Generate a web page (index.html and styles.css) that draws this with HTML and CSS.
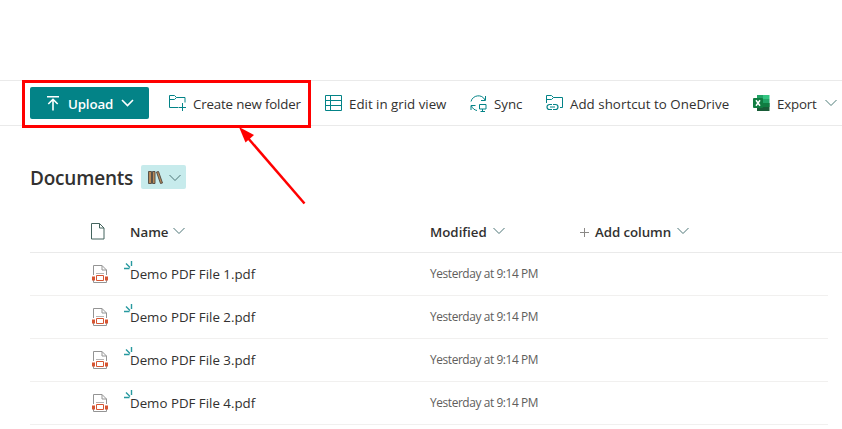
FILE: index.html
```html
<!DOCTYPE html>
<html lang="en">
<head>
<meta charset="utf-8">
<title>Documents</title>
<link rel="stylesheet" href="styles.css">
</head>
<body>
<svg class="defs" width="0" height="0" aria-hidden="true">
  <symbol id="chev" viewBox="0 0 12 8"><path d="M.5 1 6 6.500 11.500 1" fill="none" stroke="currentColor"/></symbol>
  <symbol id="pdf" viewBox="0 0 16 18">
    <path d="M1.500 10V.500h8.500l4.500 4.500v5M1.500 15v2.500h13V15M10 .500V5h4.500" fill="#fff" stroke="#949494"/>
    <path d="M4 8.500h8" stroke="#b5b5b5"/>
    <path d="M0 11.500h3v4H0zM13 11.500h3v4h-3z" fill="#d65532"/>
    <path d="M4.500 10.500h7v5h-7z" fill="#fff" stroke="#d65532"/>
  </symbol>
  <symbol id="spark" viewBox="0 0 9 9"><path d="M0 7.500h5.500M2 2.500l4 4M7.500 0v5" fill="none" stroke="#27999f" stroke-width="1.400"/></symbol>
</svg>
<header class="toolbar">
  <button class="upload">
    <svg class="i-up" viewBox="0 0 12 15"><path d="M0 .800h12M6 14.500V3.500M1.300 8 6 3.300 10.700 8" fill="none" stroke="#fff" stroke-width="1.600"/></svg>
    <span class="t-upload">Upload</span>
    <svg class="chev bold"><use href="#chev"/></svg>
  </button>
  <div class="cmd create">
    <svg width="18" height="16" viewBox="0 0 18 16" fill="none" stroke="#038387"><path d="M9.500 12.500H.500V.500h5l2 2h8.500v5M.500 4.500h5l2-2M13.500 8v8M10 12.500h7"/></svg>
    <span class="t-create">Create new folder</span>
  </div>
  <div class="cmd grid">
    <svg width="17" height="17" viewBox="0 0 17 17" fill="none" stroke="#038387"><path d="M.500.500h16v15H.500zM5.500.500v15M.500 5.500h16M.500 10.500h16"/></svg>
    <span class="t-grid">Edit in grid view</span>
  </div>
  <div class="cmd sync">
    <svg width="17" height="17" viewBox="0 0 17 17" fill="none" stroke="#038387"><path d="M1 6.500C2.500 0 12-1.500 15 5M15.500 1v4.500H11M1 15v-4.500h4.500M1.500 11c1 2.500 3 4 5.500 4.500M9.500 9.500h6.500V14H9.500zM12.500 14v2.500M10.500 16.500h4.500"/></svg>
    <span class="t-sync">Sync</span>
  </div>
  <div class="cmd short">
    <svg width="18" height="16" viewBox="0 0 18 16" fill="none" stroke="#038387"><path d="M.500 8V.500h5l2 2h9v10H14M.500 4.500h5l2-2"/><path d="M6 9.500H3.500a2.500 2.500 0 0 0 0 5H6M7 9.500h2.500a2.500 2.500 0 0 1 0 5H7M4 12h5" stroke-width="1.200"/></svg>
    <span class="t-short">Add shortcut to OneDrive</span>
  </div>
  <div class="cmd export">
    <svg width="17" height="16" viewBox="0 0 17 16"><path d="M4 0h6v4H4z" fill="#21a366"/><path d="M10 0h6.500v4H10z" fill="#33c481"/><path d="M4 4h6v4H4z" fill="#107c41"/><path d="M10 4h6.500v4H10z" fill="#21a366"/><path d="M4 8h12.500v8H4z" fill="#185c37"/><path d="M10 8h6.500v4H10z" fill="#107c41"/><rect y="3" width="10" height="10" rx="1" fill="#107c41"/><path d="m3 5.300 4 5.400M7 5.300l-4 5.400" stroke="#fff" stroke-width="1.500"/></svg>
    <span class="t-export">Export</span>
    <svg class="chev teal"><use href="#chev"/></svg>
  </div>
</header>
<main>
  <div class="title">
    <h1>Documents</h1>
    <div class="view">
      <svg width="15" height="13" viewBox="0 0 15 13" fill="#b98a58" stroke="#4c4640" stroke-width=".9"><path d="M.500.500H3.500v12H.500zM4.500 .500h2.500v12H4.500zM8.500 1l2-.500 4 11.500-2 .500z"/></svg>
      <svg class="chev"><use href="#chev"/></svg>
    </div>
  </div>
  <div class="row head">
    <svg class="doc" viewBox="0 0 14 17" fill="none" stroke="#44645e"><path d="M.500.500h8l4.500 4.500v11H.500zM8.500.500V5H13"/></svg>
    <div class="name"><span class="t-name">Name</span><svg class="chev"><use href="#chev"/></svg></div>
    <div class="mod"><span class="t-mod">Modified</span><svg class="chev"><use href="#chev"/></svg></div>
    <div class="add"><svg width="9" height="9" viewBox="0 0 9 9"><path d="M4.500 0v9M0 4.500h9" stroke="#8a8886"/></svg><span class="t-add">Add column</span><svg class="chev"><use href="#chev"/></svg></div>
  </div>
  <div class="row"><svg class="pdf"><use href="#pdf"/></svg><div class="name file"><svg class="spark"><use href="#spark"/></svg>Demo PDF File 1.pdf</div><div class="date">Yesterday at 9:14 PM</div></div>
  <div class="row"><svg class="pdf"><use href="#pdf"/></svg><div class="name file"><svg class="spark"><use href="#spark"/></svg>Demo PDF File 2.pdf</div><div class="date">Yesterday at 9:14 PM</div></div>
  <div class="row"><svg class="pdf"><use href="#pdf"/></svg><div class="name file"><svg class="spark"><use href="#spark"/></svg>Demo PDF File 3.pdf</div><div class="date">Yesterday at 9:14 PM</div></div>
  <div class="row"><svg class="pdf"><use href="#pdf"/></svg><div class="name file"><svg class="spark"><use href="#spark"/></svg>Demo PDF File 4.pdf</div><div class="date">Yesterday at 9:14 PM</div></div>
</main>
<svg class="callout" width="842" height="429" viewBox="0 0 842 429">
  <rect x="23.500" y="81.500" width="286" height="45" fill="none" stroke="#f00" stroke-width="3"/>
  <path d="m304.500 203.500-57-66" stroke="#f00" stroke-width="2.500"/>
  <path d="m239 127 15 8-8.500 7.500z" fill="#f00"/>
</svg>
</body>
</html>
```

FILE: styles.css
```css
* { box-sizing: border-box; }
body {
  margin: 0;
  padding-top: 80px;
  height: 429px;
  overflow: hidden;
  position: relative;
  background: #fff;
  color: #323130;
  font: 13.3px/20px "Open Sans", "Noto Sans", sans-serif;
  white-space: nowrap;
}
svg { flex: none; display: block; }
.defs { position: absolute; }
span { flex: none; }
.toolbar {
  height: 46px;
  border-top: 1px solid #eaeaea;
  border-bottom: 1px solid #eaeaea;
  padding-left: 30px;
  display: flex;
  align-items: center;
}
.toolbar span { padding-top: 2px; }
.upload {
  width: 119px;
  height: 32px;
  flex: none;
  margin: 0 20px 0 0;
  padding: 0 0 0 17px;
  border: 0;
  border-radius: 2px;
  background: #038387;
  color: #fff;
  font: 600 13.3px/20px "Open Sans", sans-serif;
  letter-spacing: -.15px;
  display: flex;
  align-items: center;
}
.i-up { width: 12px; height: 15px; margin-right: 9px; }
.t-upload { width: 53px; text-align: left; }
.chev { width: 12px; height: 8px; color: #4c7476; }
.chev.bold { width: 13px; color: #fff; stroke-width: 1.6; }
.chev.teal { color: #4e7d78; }
.cmd { display: flex; align-items: center; flex: none; }
.create { width: 156px; gap: 6px; }
.t-create { letter-spacing: -.16px; }
.grid { width: 145px; gap: 7px; }
.sync { width: 76px; gap: 7px; }
.short { width: 207px; gap: 6px; }
.t-short { letter-spacing: .04px; }
.export { gap: 7px; }
.t-export { width: 41px; letter-spacing: -.2px; }
main { padding-left: 30px; }
.title { height: 86px; padding-top: 39px; display: flex; align-items: flex-start; gap: 8px; }
h1 { margin: 0; width: 103px; font-size: 19px; line-height: 26px; font-weight: 600; letter-spacing: -.2px; }
.view {
  width: 45px;
  height: 24px;
  border-radius: 2px;
  background: #c7ebec;
  display: flex;
  align-items: center;
  gap: 6px;
  padding: 1px 0 0 7px;
}
.row {
  height: 43px;
  width: 798px;
  border-bottom: 1px solid #f1f0ef;
  display: grid;
  grid-template-columns: 60px 40px 300px 149px 1fr;
  align-items: center;
}
.head { width: 812px; height: 41px; border-color: #eaeaea; font-weight: 600; }
.head > div { display: flex; align-items: center; }
.head .chev { margin-bottom: 2px; }
.doc { grid-column: 2; width: 14px; height: 17px; margin: 0 0 2px 1px; }
.pdf { grid-column: 2; width: 16px; height: 18px; margin-left: 2px; }
.name { grid-column: 3; }
.t-name { width: 43px; }
.t-mod { width: 63px; }
.add { padding-left: 1px; }
.t-add { width: 82px; margin-left: 6px; letter-spacing: -.08px; }
.date { font-size: 11.9px; letter-spacing: -.4px; color: #605e5c; padding-bottom: 2px; }
.file { position: relative; }
.spark { position: absolute; width: 9px; height: 9px; left: -6px; top: -3px; }
.callout { position: absolute; left: 0; top: 0; pointer-events: none; }
```
